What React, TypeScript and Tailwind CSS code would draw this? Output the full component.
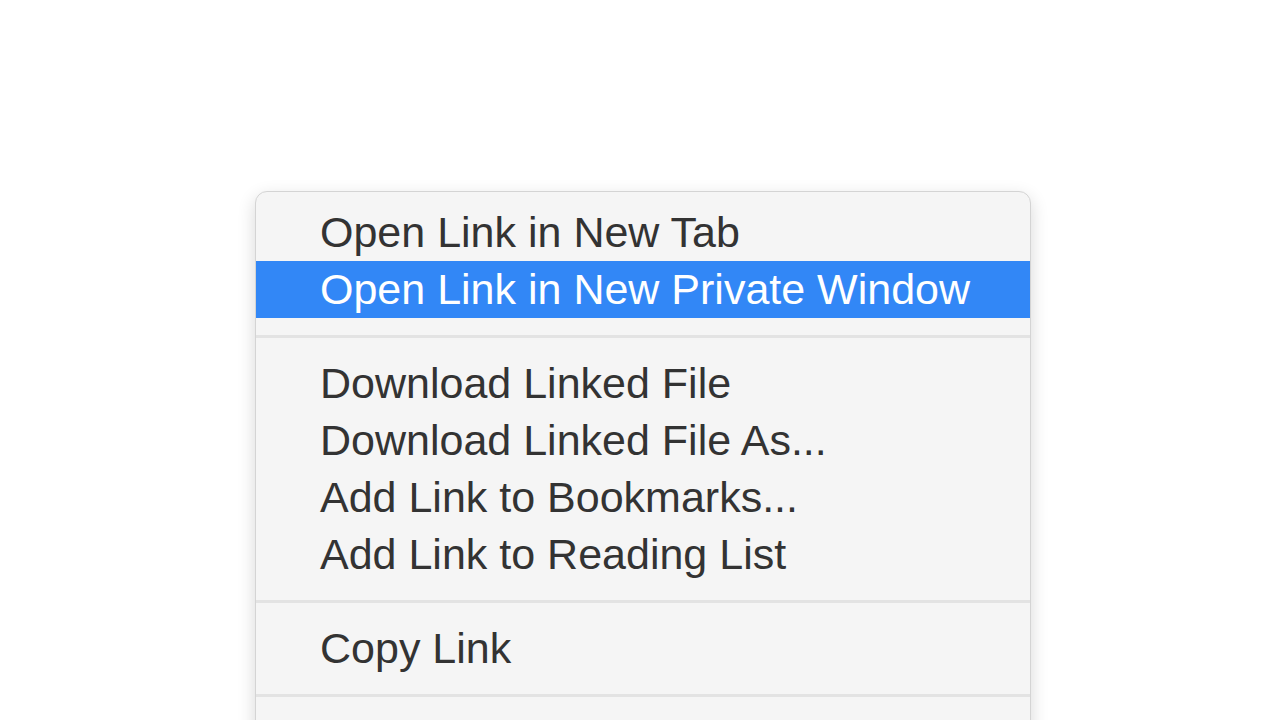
import React from 'react'

type Entry = { label: string; active?: boolean } | 'sep'

const entries: Entry[] = [
  { label: 'Open Link in New Tab' },
  { label: 'Open Link in New Private Window', active: true },
  'sep',
  { label: 'Download Linked File' },
  { label: 'Download Linked File As...' },
  { label: 'Add Link to Bookmarks...' },
  { label: 'Add Link to Reading List' },
  'sep',
  { label: 'Copy Link' },
  'sep',
  { label: 'Share' },
]

export default function App() {
  return (
    <div
      className="h-[720px] w-[1280px] overflow-hidden bg-white"
      style={{ fontFamily: '"Liberation Sans", Arial, sans-serif' }}
    >
      <div className="pl-[255px] pt-[191px]">
        <div className="w-[776px] rounded-[12px] border border-[#d4d4d4] bg-[#f5f5f5] pt-[12px] shadow-[0_6px_18px_rgba(0,0,0,0.16)] overflow-hidden">
          {entries.map((e, i) =>
            e === 'sep' ? (
              <div key={i} className="flex h-[37px] items-center">
                <div className="h-[3px] w-full bg-[#e3e3e3]" />
              </div>
            ) : (
              <div
                key={i}
                className={`h-[57px] pl-[64px] text-[43px] leading-[57px] whitespace-nowrap ${
                  e.active ? 'bg-[#3287f6] text-white' : 'text-[#333333]'
                }`}
              >
                {e.label}
              </div>
            )
          )}
        </div>
      </div>
    </div>
  )
}
